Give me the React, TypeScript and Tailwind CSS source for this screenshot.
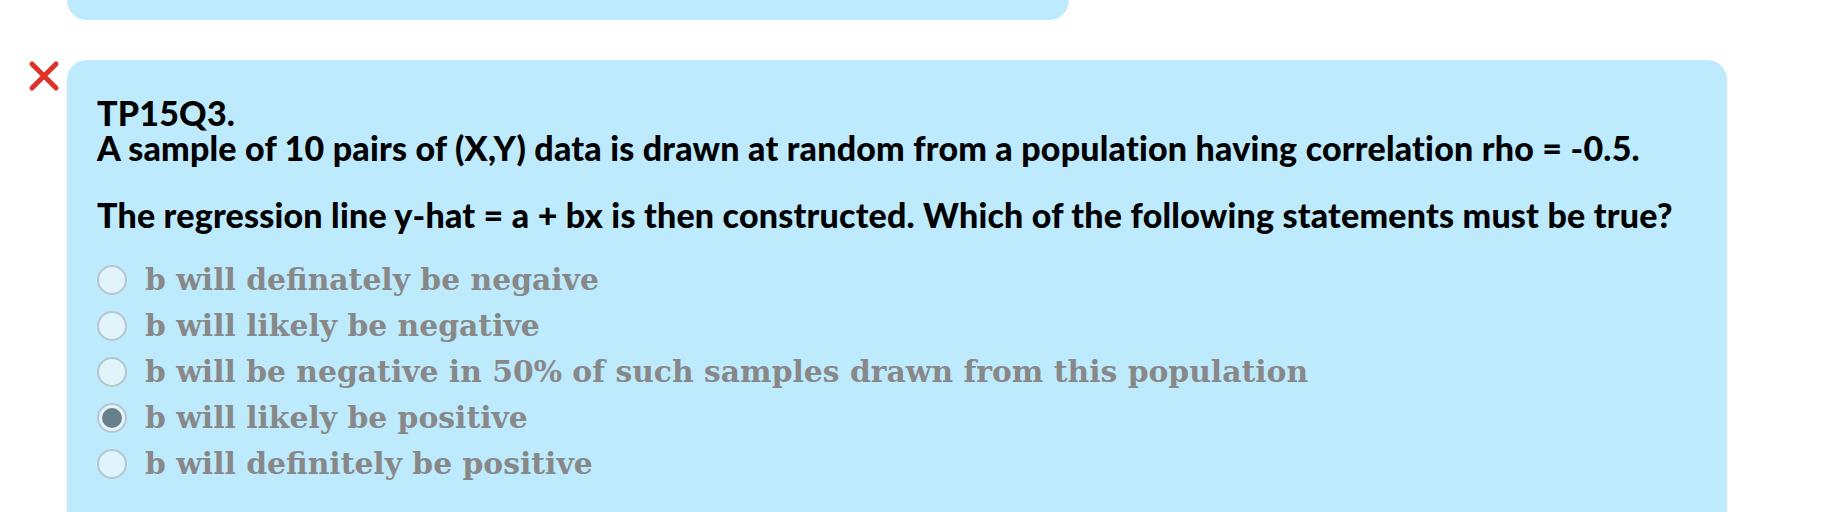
import React from 'react';

const options = [
  'b will definately be negaive',
  'b will likely be negative',
  'b will be negative in 50% of such samples drawn from this population',
  'b will likely be positive',
  'b will definitely be positive',
];

const Radio: React.FC<{ checked?: boolean }> = ({ checked }) => (
  <span className="flex h-[30px] w-[30px] shrink-0 items-center justify-center rounded-full border-2 border-[#b6c6cd] bg-[#e1f4fb]">
    {checked && <span className="h-[20px] w-[20px] rounded-full bg-[#67808a]" />}
  </span>
);

const App: React.FC = () => {
  const selected = 3;

  return (
    <div className="min-h-screen bg-white font-['Lato',sans-serif]">
      {/* tail of the previous question card */}
      <div className="pl-[67px]">
        <div className="h-[20px] w-[1002px] rounded-b-[20px] bg-[#bdeafd]" />
      </div>

      <div className="mt-[40px] flex">
        <div className="w-[67px] shrink-0 pl-[28px]">
          <svg width="32" height="32" viewBox="0 0 32 32">
            <path d="M4 4 L28 28 M28 4 L4 28" stroke="#e1322a" strokeWidth="5" strokeLinecap="round" />
          </svg>
        </div>

        <div className="w-[1660px] rounded-[20px] bg-[#bdeafd] pb-[60px] pl-[30px] pt-[35px]">
          <div className="text-[34px] font-black leading-[35px] tracking-[0.2px] text-black">
            <p>TP15Q3.</p>
            <p>A sample of 10 pairs of (X,Y) data is drawn at random from a population having correlation rho = -0.5.</p>
          </div>
          <p className="mt-[32px] text-[34px] font-black leading-[35px] tracking-[0.2px] text-black">
            The regression line y-hat = a + bx is then constructed. Which of the following statements must be true?
          </p>

          <div className="mt-[25px]">
            {options.map((opt, i) => (
              <label key={opt} className="flex h-[46px] items-center gap-[18px]">
                <Radio checked={i === selected} />
                <span className="font-['DejaVu_Serif',serif] text-[29.8px] font-bold text-[#888888]">{opt}</span>
              </label>
            ))}
          </div>
        </div>
      </div>
    </div>
  );
};

export default App;
